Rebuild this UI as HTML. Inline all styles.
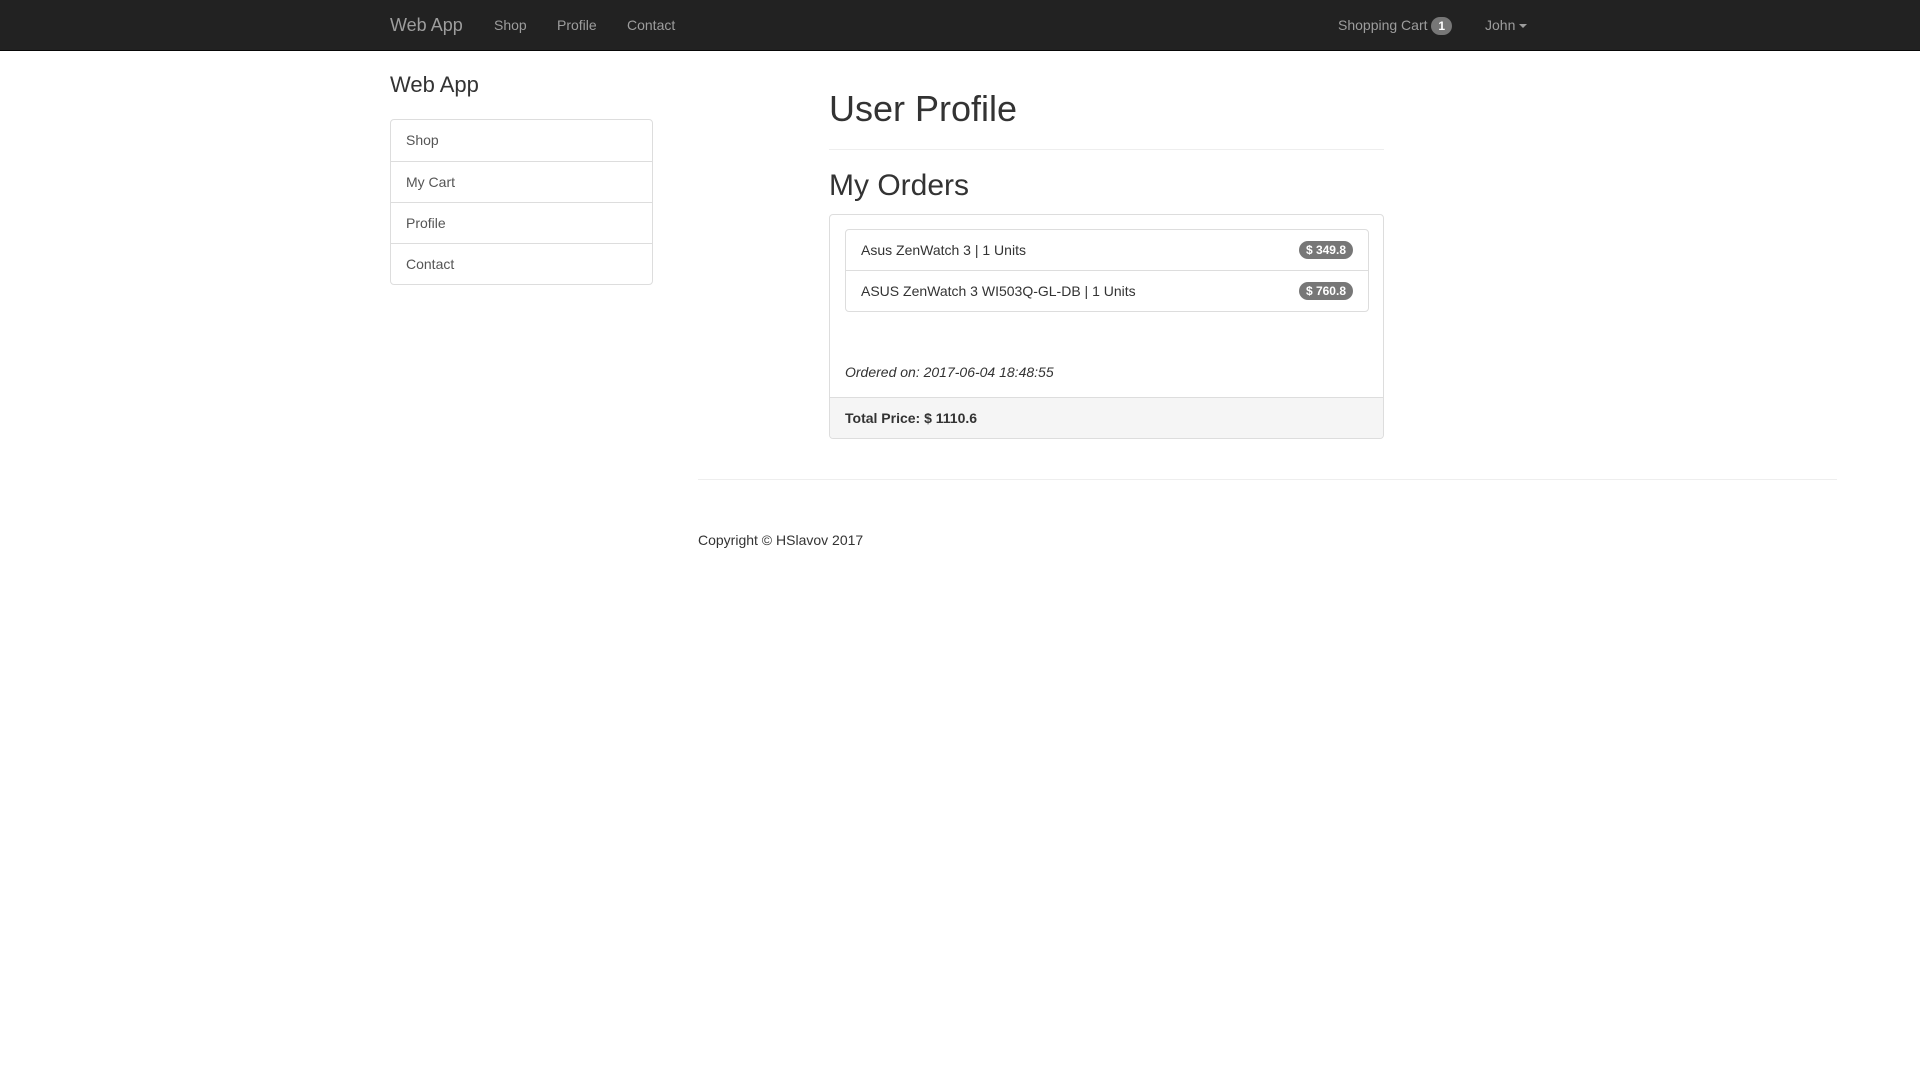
<!DOCTYPE html>
<html><head><meta charset="utf-8"><style>
*{box-sizing:border-box}
body{margin:0;font-family:"Liberation Sans",Arial,sans-serif;font-size:14px;color:#333;background:#fff;width:1920px;height:1080px;position:relative}
.nav{position:absolute;left:0;top:0;width:1920px;height:51px;background:#222;border-bottom:1px solid #080808}
.nav .i{position:absolute;top:0;line-height:50px;color:#9d9d9d;font-size:14px}
.a{position:absolute}
.lg{position:absolute;left:390px;top:119px;width:263px;border:1px solid #ddd;border-radius:4px}
.lg div{height:41px;line-height:40px;padding-left:15px;border-top:1px solid #ddd;color:#555}
.lg div:first-child{border-top:none}
.badge{display:inline-block;background:#777;color:#fff;font-weight:bold;font-size:12px;border-radius:10px;padding:3px 7px;line-height:12px}
.caret{display:inline-block;width:0;height:0;border-left:4px solid transparent;border-right:4px solid transparent;border-top:4px solid #9d9d9d;vertical-align:middle;margin-left:4px}
</style></head><body>
<div class="nav">
<span class="i" style="left:390px;font-size:18px">Web App</span>
<span class="i" style="left:494px">Shop</span>
<span class="i" style="left:557px">Profile</span>
<span class="i" style="left:627px">Contact</span>
<span class="i" style="left:1338px">Shopping Cart <span class="badge">1</span></span>
<span class="i" style="left:1485px">John<span class="caret"></span></span>
</div>
<div class="a" style="left:390px;top:71px;font-size:22px;line-height:28px;font-weight:500">Web App</div>
<div class="lg"><div>Shop</div><div>My Cart</div><div>Profile</div><div>Contact</div></div>
<div class="a" style="left:829px;top:87px;font-size:36px;line-height:44px">User Profile</div>
<div class="a" style="left:829px;top:149px;width:555px;border-top:1px solid #eee"></div>
<div class="a" style="left:829px;top:168px;font-size:30px;line-height:36px">My Orders</div>
<div class="a" style="left:829px;top:214px;width:555px;height:225px;border:1px solid #ddd;border-radius:4px;overflow:hidden">
 <div class="a" style="left:15px;top:14px;width:524px;height:83px;border:1px solid #ddd;border-radius:4px">
  <div style="height:41px;line-height:40px;padding:0 15px;border-bottom:1px solid #ddd;position:relative">Asus ZenWatch 3 | 1 Units<span class="badge" style="position:absolute;right:15px;top:11px">$ 349.8</span></div>
  <div style="height:41px;line-height:40px;padding:0 15px;position:relative">ASUS ZenWatch 3 WI503Q-GL-DB | 1 Units<span class="badge" style="position:absolute;right:15px;top:11px">$ 760.8</span></div>
 </div>
 <div class="a" style="left:15px;top:147px;font-style:italic;line-height:20px">Ordered on: 2017-06-04 18:48:55</div>
 <div class="a" style="left:0;top:182px;width:555px;height:43px;background:#f5f5f5;border-top:1px solid #ddd;padding-left:15px;line-height:41px;font-weight:bold">Total Price: $ 1110.6</div>
</div>
<div class="a" style="left:698px;top:479px;width:1139px;border-top:1px solid #eee"></div>
<div class="a" style="left:698px;top:530px;line-height:20px">Copyright © HSlavov 2017</div>
</body></html>
